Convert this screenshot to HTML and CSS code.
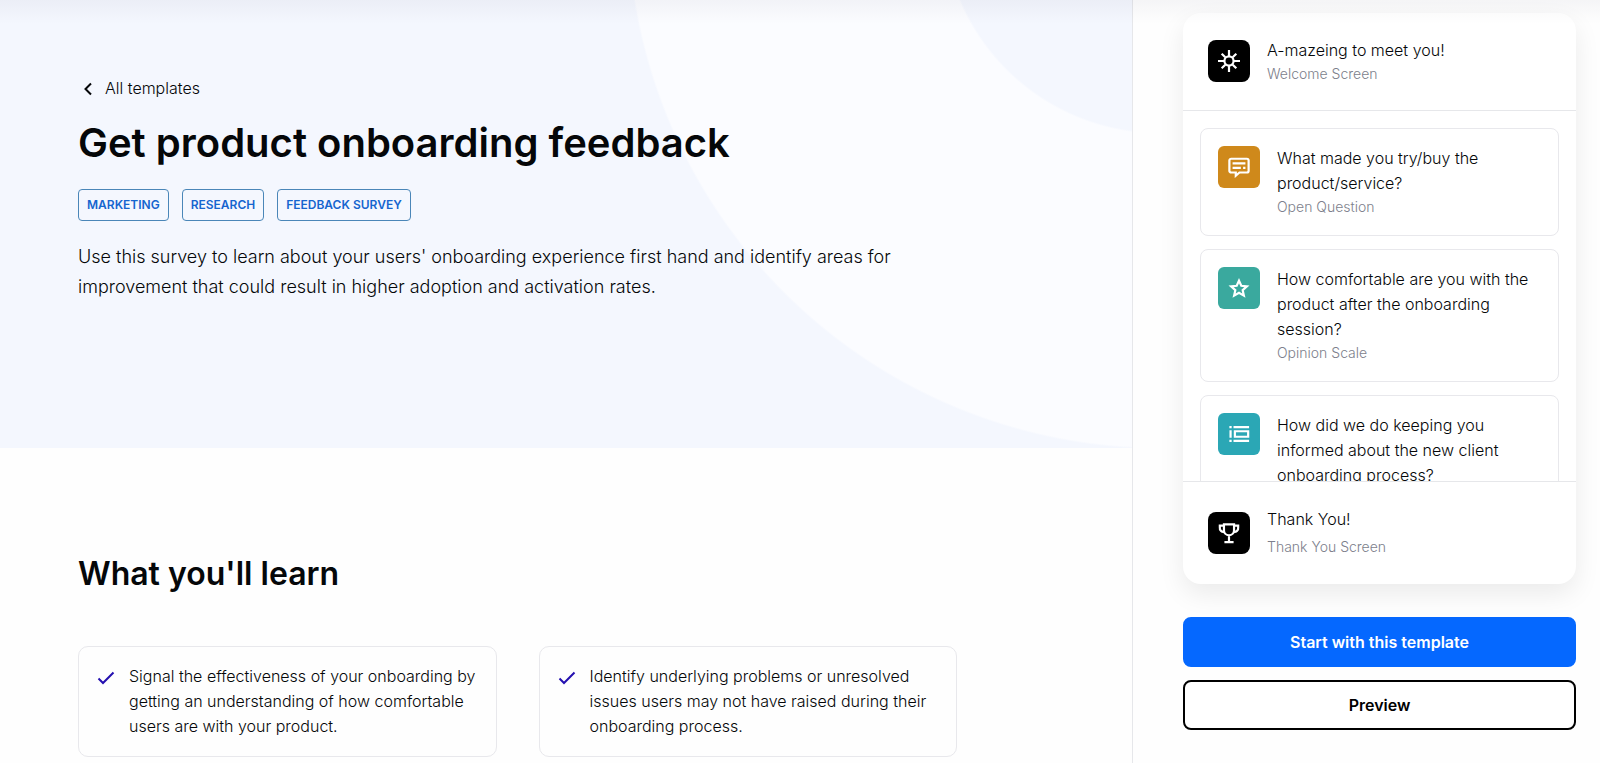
FILE: index.html
```html
<!DOCTYPE html>
<html lang="en">
<head>
<meta charset="utf-8">
<meta name="viewport" content="width=device-width, initial-scale=1">
<title>Get product onboarding feedback</title>
<link rel="stylesheet" href="styles.css">
</head>
<body>
<div class="page">
  <main class="content">
    <header class="hero">
      <a class="back" href="#">
        <svg class="back-icon" viewBox="0 0 20 20" aria-hidden="true"><path d="M13 4.500 7.500 10l5.500 5.500"/></svg>
        All templates
      </a>
      <h1 class="title">Get product onboarding feedback</h1>
      <ul class="tags">
        <li class="tag">MARKETING</li>
        <li class="tag">RESEARCH</li>
        <li class="tag">FEEDBACK SURVEY</li>
      </ul>
      <p class="lead">Use this survey to learn about your users' onboarding experience first hand and identify areas for improvement that could result in higher adoption and activation rates.</p>
    </header>
    <section class="learn">
      <h2 class="subtitle">What you'll learn</h2>
      <div class="benefits">
        <div class="benefit">
          <svg class="check" viewBox="0 0 18 18" aria-hidden="true"><path d="M1.500 9.500 6 14 16.500 3.500"/></svg>
          <p class="benefit-text">Signal the effectiveness of your onboarding by getting an understanding of how comfortable users are with your product.</p>
        </div>
        <div class="benefit">
          <svg class="check" viewBox="0 0 18 18" aria-hidden="true"><path d="M1.500 9.500 6 14 16.500 3.500"/></svg>
          <p class="benefit-text">Identify underlying problems or unresolved issues users may not have raised during their onboarding process.</p>
        </div>
      </div>
    </section>
  </main>

  <aside class="sidebar">
    <div class="outline">
      <div class="screen">
        <span class="tile tile-black">
          <svg class="glyph" viewBox="0 0 24 24" aria-hidden="true"><circle cx="12" cy="12" r="5"/><path d="M12 0v7M12 17v7M0 12h7M17 12h7M4 4l4 4M16 16l4 4M4 20l4-4M16 8l4-4"/></svg>
        </span>
        <div>
          <p class="name">A-mazeing to meet you!</p>
          <p class="kind">Welcome Screen</p>
        </div>
      </div>
      <div class="questions">
        <div class="question">
          <span class="tile tile-amber">
            <svg class="glyph" viewBox="0 0 24 24" aria-hidden="true"><path d="M3.500 3h17a2 2 0 0 1 2 2v11a2 2 0 0 1-2 2H12.500L8.500 21.500v-3.500h-5a2 2 0 0 1-2-2v-11a2 2 0 0 1 2-2z"/><path d="M5 8h14M5 13h9M16.500 13h2.500"/></svg>
          </span>
          <div>
            <p class="name">What made you try/buy the product/service?</p>
            <p class="kind">Open Question</p>
          </div>
        </div>
        <div class="question">
          <span class="tile tile-green">
            <svg class="glyph" viewBox="0 0 24 24" aria-hidden="true"><path d="M12 4l2.500 5.600 6.100.6-4.600 4.100 1.300 6L12 17.200l-5.300 3.100 1.300-6-4.600-4.100 6.100-.6z"/></svg>
          </span>
          <div>
            <p class="name">How comfortable are you with the product after the onboarding session?</p>
            <p class="kind">Opinion Scale</p>
          </div>
        </div>
        <div class="question">
          <span class="tile tile-teal">
            <svg class="glyph" viewBox="0 0 24 24" aria-hidden="true"><path d="M1.500 4.500h2.500M6 4.500H23M1.500 19.500h2.500M6 19.500H23M2.800 8v8M7.500 9H22v6H7.500z"/></svg>
          </span>
          <div>
            <p class="name">How did we do keeping you informed about the new client onboarding process?</p>
            <p class="kind">Opinion Scale</p>
          </div>
        </div>
      </div>
      <div class="screen screen-end">
        <span class="tile tile-black">
          <svg class="glyph" viewBox="0 0 24 24" aria-hidden="true"><path d="M6.500 2.500h11v6.500a5.500 5.500 0 0 1-11 0zM6.500 4H2v2a4 4 0 0 0 5 4.500M17.500 4H22v2a4 4 0 0 1-5 4.500M12 14.500v7M7 22h10"/></svg>
        </span>
        <div>
          <p class="name">Thank You!</p>
          <p class="kind">Thank You Screen</p>
        </div>
      </div>
    </div>
    <div class="actions">
      <button class="button button-primary" type="button">Start with this template</button>
      <button class="button button-outline" type="button">Preview</button>
    </div>
  </aside>
</div>
</body>
</html>
```
FILE: styles.css
```css
* {
  box-sizing: border-box;
}

body,
h1,
h2,
p,
ul {
  margin: 0;
}

body {
  background: #fefefe;
  color: #050709;
  font-family: Inter, "Liberation Sans", sans-serif;
  font-size: 16px;
  font-weight: 300;
  line-height: 25px;
}

.page {
  position: relative;
  display: flex;
  height: 100vh;
  overflow: hidden;
}

.page::before {
  content: "";
  position: absolute;
  inset: 0 0 auto;
  height: 24px;
  background: linear-gradient(rgba(20, 20, 60, 0.04), rgba(20, 20, 60, 0));
  pointer-events: none;
  z-index: 1;
}

.content {
  flex: 1;
  min-width: 0;
}

.hero {
  padding: 76px 78px 146px;
  background: radial-gradient(circle at calc(100% + 28px) -84px, #f4f7fe 216px, #fbfcff 218px, #fbfcff 531px, #f4f7fe 533px);
}

.back {
  display: inline-flex;
  align-items: center;
  gap: 7px;
  color: inherit;
  text-decoration: none;
}

.back-icon {
  width: 20px;
  height: 20px;
  fill: none;
  stroke: currentColor;
  stroke-width: 2;
}

.title {
  margin-top: 10px;
  font-size: 40px;
  font-weight: 600;
  line-height: 54px;
}

.tags {
  display: flex;
  gap: 13px;
  margin-top: 19px;
  padding: 0;
  list-style: none;
}

.tag {
  padding: 0 8px;
  border: 1px solid #4a86b8;
  border-radius: 4px;
  color: #1565cf;
  font-size: 12px;
  font-weight: 600;
  line-height: 30px;
}

.lead {
  max-width: 840px;
  margin-top: 21px;
  font-size: 18px;
  line-height: 30px;
}

.learn {
  padding: 104px 175px 0 78px;
}

.subtitle {
  font-size: 32px;
  font-weight: 600;
  line-height: 44px;
}

.benefits {
  display: grid;
  grid-template-columns: 1fr 1fr;
  gap: 42px;
  margin-top: 50px;
}

.benefit {
  display: flex;
  gap: 14px;
  padding: 17px 14px 17px 18px;
  border: 1px solid #e8e8ec;
  border-radius: 10px;
}

.check {
  flex: none;
  width: 18px;
  height: 18px;
  margin-top: 5px;
  fill: none;
  stroke: #2410b0;
  stroke-width: 2;
}

.sidebar {
  display: flex;
  flex-direction: column;
  gap: 33px;
  width: 468px;
  padding: 13px 24px 33px 50px;
  border-left: 1px solid #e6e7ea;
}

.outline {
  display: flex;
  flex: 1;
  flex-direction: column;
  min-height: 0;
  border-radius: 18px;
  background: #fff;
  box-shadow: 0 10px 26px rgba(0, 0, 0, 0.08);
}

.screen {
  display: flex;
  gap: 17px;
  padding: 25px;
}

.screen .tile {
  margin-top: 2px;
  border-radius: 8px;
}

.screen-end {
  align-items: center;
  padding: 25px 25px 26px;
}

.screen-end .tile {
  margin-top: 0;
}

.screen-end .kind {
  margin-top: 4px;
}

.tile {
  display: grid;
  flex: none;
  place-items: center;
  width: 42px;
  height: 42px;
  border-radius: 6px;
}

.tile-black {
  background: #000;
}

.tile-amber {
  background: #cf891b;
}

.tile-green {
  background: #3aa99e;
}

.tile-teal {
  background: #2ba7b5;
}

.glyph {
  width: 22px;
  height: 22px;
  fill: none;
  stroke: #fff;
  stroke-width: 2.4;
}

.kind {
  color: #7d7f8c;
  font-size: 14px;
  line-height: 22px;
}

.questions {
  display: flex;
  flex: 1;
  flex-direction: column;
  gap: 13px;
  min-height: 0;
  padding: 17px 17px 0;
  overflow: hidden;
  border: solid #e6e7ea;
  border-width: 1px 0;
}

.question {
  display: flex;
  flex: none;
  gap: 17px;
  padding: 17px;
  border: 1px solid #e8e8ec;
  border-radius: 8px;
}

.actions {
  display: flex;
  flex-direction: column;
  gap: 13px;
}

.button {
  height: 50px;
  border: 2px solid #000;
  border-radius: 8px;
  background: #fff;
  color: #000;
  font: 600 16px/24px Inter, "Liberation Sans", sans-serif;
}

.button-primary {
  border-color: #0568ff;
  background: #0568ff;
  color: #fff;
}
```
